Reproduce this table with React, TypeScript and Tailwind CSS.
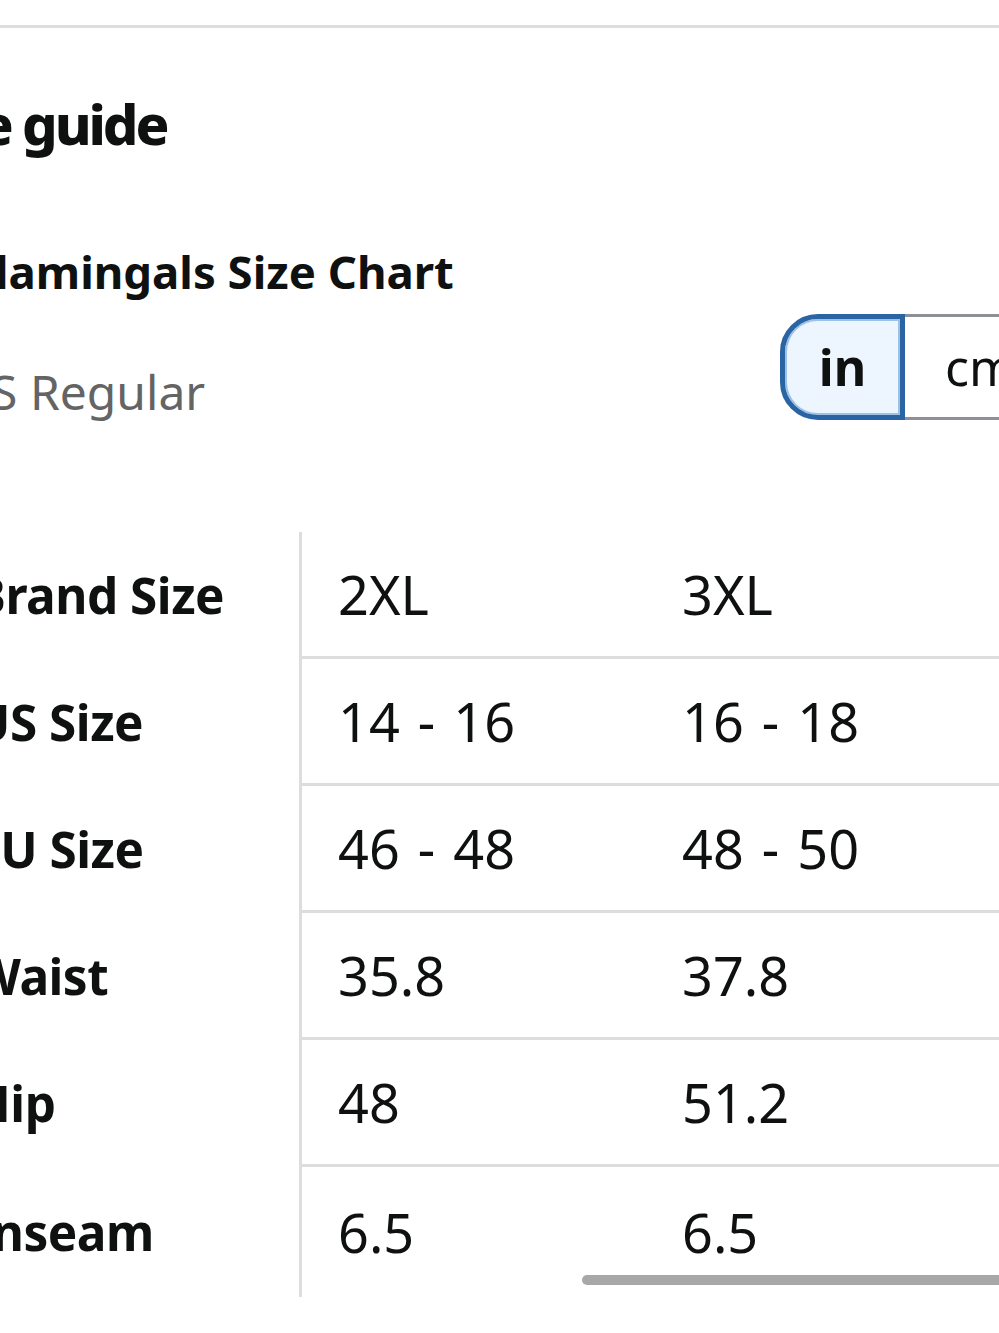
const rows = [
  { label: "Brand Size", a: "2XL", b: "3XL" },
  { label: "US Size", a: "14 - 16", b: "16 - 18" },
  { label: "EU Size", a: "46 - 48", b: "48 - 50" },
  { label: "Waist", a: "35.8", b: "37.8" },
  { label: "Hip", a: "48", b: "51.2" },
  { label: "Inseam", a: "6.5", b: "6.5" },
];

function UnitToggle() {
  return (
    <div className="-mr-[126px] mb-[-10px] flex h-[106px] shrink-0 self-start">
      <div className="flex w-[125px] items-center justify-center rounded-l-[38px] border-[5px] border-[#2b64a3] bg-[#edf5ff] text-[50px] font-bold text-[#0f1111] shadow-[inset_0_0_0_2px_#9dc2e8]">
        in
      </div>
      <div className="flex w-[220px] items-center border-y-[3px] border-[#8d9096] pl-[40px] text-[50px] text-[#0f1111]">
        cm
      </div>
    </div>
  );
}

export default function App() {
  return (
    <div
      className="relative h-[1333px] w-[999px] overflow-hidden bg-white text-[#0f1111]"
      style={{ fontFamily: '"Noto Sans", "Open Sans", sans-serif' }}
    >
      <div className="mt-[25px] h-[3px] bg-[#dedede]" />

      <h1 className="-ml-[88px] mt-[63px] whitespace-nowrap text-[56px] font-extrabold leading-[64px] tracking-[-0.055em]">
        Size guide
      </h1>

      <div className="-ml-[30px] mt-[88px]">
        <h2 className="whitespace-nowrap text-[45.5px] font-bold leading-[56px]">
          Flamingals Size Chart
        </h2>
        <div className="mt-[15px] flex items-start justify-between">
          <div className="-ml-[14px] whitespace-nowrap pt-[50px] text-[48px] leading-[56px] text-[#646464]">
            US Regular
          </div>
          <UnitToggle />
        </div>
      </div>

      <div className="mt-[112px] grid grid-cols-[302px_342px_1fr]">
        {rows.map((r, i) => {
          const last = i === rows.length - 1;
          const cell = last
            ? "flex h-[130px] items-center"
            : "flex h-[127px] items-center border-b-[3px] border-[#dddddd]";
          return (
            <div key={r.label} className="contents">
              <div className="flex items-center border-r-[3px] border-[#dddddd]">
                <span className="-ml-[27px] whitespace-nowrap text-[49.5px] font-bold tracking-[-0.01em]">
                  {r.label}
                </span>
              </div>
              <div className={cell + " pl-[36px] text-[54px] [word-spacing:4px]"}>{r.a}</div>
              <div className={cell + " pl-[38px] text-[54px] [word-spacing:4px]"}>{r.b}</div>
            </div>
          );
        })}
      </div>

      <div className="absolute left-[582px] top-[1275px] h-[10px] w-[440px] rounded-full bg-[#a8a8a8]" />
    </div>
  );
}
